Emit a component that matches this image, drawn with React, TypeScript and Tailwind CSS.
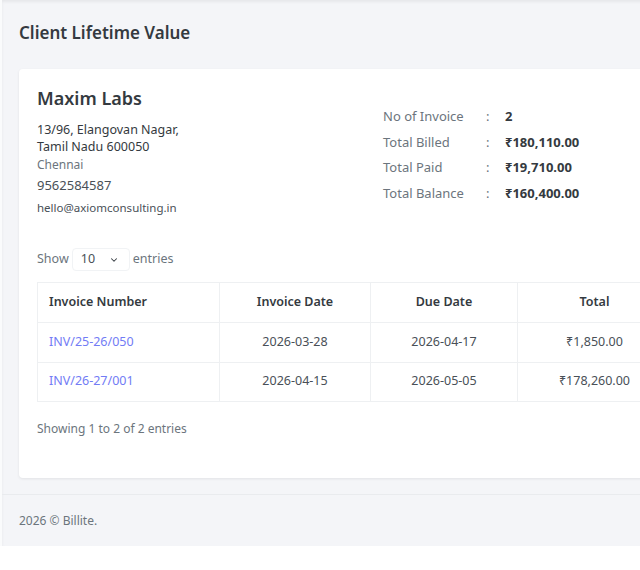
import React from "react";

const stats = [
  { label: "No of Invoice", value: "2" },
  { label: "Total Billed", value: "₹180,110.00" },
  { label: "Total Paid", value: "₹19,710.00" },
  { label: "Total Balance", value: "₹160,400.00" },
];

const invoices = [
  { no: "INV/25-26/050", date: "2026-03-28", due: "2026-04-17", total: "₹1,850.00" },
  { no: "INV/26-27/001", date: "2026-04-15", due: "2026-05-05", total: "₹178,260.00" },
];

export default function App() {
  return (
    <div
      className="w-[640px] h-[570px] overflow-hidden bg-white text-[#343a40]"
      style={{ fontFamily: '"Noto Sans", "Liberation Sans", sans-serif' }}
    >
      <div className="w-[720px] bg-[#f4f5f8] border-l-2 border-[#fafbfc] shadow-[inset_0_2px_3px_rgba(0,0,0,0.06)]">
        <div className="px-[17px] pt-[21px]">
          <h4 className="text-[17px] leading-6 font-semibold text-[#343a40]">Client Lifetime Value</h4>

          <div className="mt-[24px] w-[672px] bg-white rounded shadow-[0_1px_3px_rgba(0,0,0,0.08)] px-[18px] pt-[17px] pb-[41px]">
            <div className="flex">
              <div className="w-[346px]">
                <h3 className="text-[18px] leading-6 font-semibold text-[#343a40]">Maxim Labs</h3>
                <p className="mt-[11px] text-[12.5px] leading-[17px] text-[#343a40]">
                  13/96, Elangovan Nagar,
                  <br />
                  Tamil Nadu 600050
                </p>
                <p className="mt-[1px] text-[12px] leading-[17px] text-[#6c757d]">Chennai</p>
                <p className="mt-[4px] text-[13px] leading-[17px] text-[#495057]">9562584587</p>
                <p className="mt-[5px] text-[11.5px] leading-[17px] text-[#495057]">hello@axiomconsulting.in</p>
              </div>
              <div className="pt-[18px]">
                {stats.map((s) => (
                  <div key={s.label} className="flex items-center h-[25.5px] text-[13px]">
                    <span className="w-[103px] text-[#6c757d]">{s.label}</span>
                    <span className="w-[19px] text-[#6c757d]">:</span>
                    <span className="font-bold text-[#343a40]">{s.value}</span>
                  </div>
                ))}
              </div>
            </div>

            <div className="mt-[32px] flex items-center gap-[3px] text-[12.5px] text-[#6c757d]">
              <span>Show</span>
              <div className="flex items-center justify-between w-[58px] h-[23px] border border-[#f1f3f5] rounded pl-[8px] pr-[10px] text-[#495057]">
                <span>10</span>
                <svg width="10" height="10" viewBox="0 0 24 24" fill="none" stroke="#343a40" strokeWidth="2.5" strokeLinecap="round" strokeLinejoin="round">
                  <path d="M6 9l6 6 6-6" />
                </svg>
              </div>
              <span>entries</span>
            </div>

            <table className="mt-[11px] w-[634px] border-collapse table-fixed text-[12.5px]">
              <colgroup>
                <col className="w-[182px]" />
                <col className="w-[151px]" />
                <col className="w-[147px]" />
                <col className="w-[154px]" />
              </colgroup>
              <thead>
                <tr className="h-[40px]">
                  <th className="border border-[#eef0f2] text-left pl-[11px] font-semibold text-[#343a40]">Invoice Number</th>
                  <th className="border border-[#eef0f2] font-semibold text-[#343a40]">Invoice Date</th>
                  <th className="border border-[#eef0f2] font-semibold text-[#343a40]">Due Date</th>
                  <th className="border border-[#eef0f2] font-semibold text-[#343a40]">Total</th>
                </tr>
              </thead>
              <tbody>
                {invoices.map((inv) => (
                  <tr key={inv.no} className="h-[39.5px]">
                    <td className="border border-[#eef0f2] pl-[11px] text-[#727cf5]">{inv.no}</td>
                    <td className="border border-[#eef0f2] text-center text-[#495057]">{inv.date}</td>
                    <td className="border border-[#eef0f2] text-center text-[#495057]">{inv.due}</td>
                    <td className="border border-[#eef0f2] text-center text-[#495057]">{inv.total}</td>
                  </tr>
                ))}
              </tbody>
            </table>

            <p className="mt-[18px] text-[12px] leading-[17px] text-[#6c757d]">Showing 1 to 2 of 2 entries</p>
          </div>
        </div>

        <footer className="mt-[16px] border-t border-[#e9ebee] px-[17px] h-[52px] flex items-center text-[12px] text-[#6c757d]">
          2026 © Billite.
        </footer>
      </div>
    </div>
  );
}
